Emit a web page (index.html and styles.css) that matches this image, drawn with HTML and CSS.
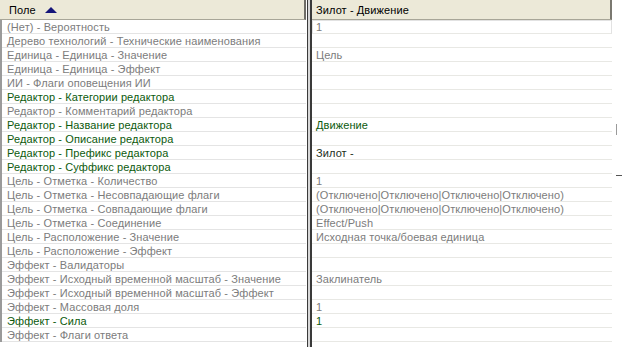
FILE: index.html
```html
<!DOCTYPE html>
<html>
<head>
<meta charset="utf-8">
<link rel="stylesheet" href="styles.css">
</head>
<body>
<div class="grid">
  <div class="col left">
    <div class="hdr hdr-left"><span>Поле</span><span class="tri"></span></div>
    <div class="row g">(Нет) - Вероятность</div>
    <div class="row g">Дерево технологий - Технические наименования</div>
    <div class="row g">Единица - Единица - Значение</div>
    <div class="row g">Единица - Единица - Эффект</div>
    <div class="row g">ИИ - Флаги оповещения ИИ</div>
    <div class="row gr">Редактор - Категории редактора</div>
    <div class="row g">Редактор - Комментарий редактора</div>
    <div class="row gr">Редактор - Название редактора</div>
    <div class="row gr">Редактор - Описание редактора</div>
    <div class="row gr">Редактор - Префикс редактора</div>
    <div class="row gr">Редактор - Суффикс редактора</div>
    <div class="row g">Цель - Отметка - Количество</div>
    <div class="row g">Цель - Отметка - Несовпадающие флаги</div>
    <div class="row g">Цель - Отметка - Совпадающие флаги</div>
    <div class="row g">Цель - Отметка - Соединение</div>
    <div class="row g">Цель - Расположение - Значение</div>
    <div class="row g">Цель - Расположение - Эффект</div>
    <div class="row g">Эффект - Валидаторы</div>
    <div class="row g">Эффект - Исходный временной масштаб - Значение</div>
    <div class="row g">Эффект - Исходный временной масштаб - Эффект</div>
    <div class="row g">Эффект - Массовая доля</div>
    <div class="row gr">Эффект - Сила</div>
    <div class="row g">Эффект - Флаги ответа</div>
  </div>
  <div class="split"></div>
  <div class="col right">
    <div class="hdr hdr-right">Зилот - Движение</div>
    <div class="row g first">1</div>
    <div class="row g"></div>
    <div class="row g">Цель</div>
    <div class="row g"></div>
    <div class="row g"></div>
    <div class="row g"></div>
    <div class="row g"></div>
    <div class="row gr">Движение</div>
    <div class="row g"></div>
    <div class="row dk">Зилот -</div>
    <div class="row g"></div>
    <div class="row g">1</div>
    <div class="row g">(Отключено|Отключено|Отключено|Отключено)</div>
    <div class="row g">(Отключено|Отключено|Отключено|Отключено)</div>
    <div class="row g">Effect/Push</div>
    <div class="row g">Исходная точка/боевая единица</div>
    <div class="row g"></div>
    <div class="row g"></div>
    <div class="row g">Заклинатель</div>
    <div class="row g"></div>
    <div class="row g">1</div>
    <div class="row gr">1</div>
    <div class="row g"></div>
  </div>
  <div class="gutter">
    <span class="mark m1"></span>
    <span class="mark m2"></span>
  </div>
</div>
</body>
</html>
```
FILE: styles.css
```css
html, body {
  margin: 0;
  padding: 0;
  background: #ffffff;
}
body {
  font-family: "Liberation Sans", Arial, sans-serif;
  font-size: 11px;
  letter-spacing: 0.1px;
  width: 627px;
  height: 347px;
  overflow: hidden;
}
.grid {
  display: flex;
  align-items: flex-start;
}
.col {
  display: flex;
  flex-direction: column;
}
.left {
  width: 306px;
  border-left: 2px solid #9a9a9a;
  box-sizing: border-box;
}
.right {
  width: 300px;
}
.split {
  width: 5px;
  height: 347px;
  box-sizing: border-box;
  margin-left: 1px;
  border-left: 1px solid #3a3a3a;
  border-right: 2px solid #3a3a3a;
  background: #d8d8d8;
}
.hdr {
  height: 20px;
  box-sizing: border-box;
  background: #ece9d8;
  border-bottom: 1px solid #a8a698;
  border-right: 2px solid #6e6d67;
  display: flex;
  align-items: center;
  color: #000;
  padding-top: 1px;
}
.hdr-left {
  margin-left: -2px;
  padding-left: 9px;
  gap: 9px;
}
.hdr-right {
  padding-left: 4px;
  border-right: 2px solid #7a7870;
}
.tri {
  width: 0;
  height: 0;
  border-left: 6px solid transparent;
  border-right: 6px solid transparent;
  border-bottom: 6px solid #15157a;
  margin-top: -1px;
}
.row {
  height: 14px;
  box-sizing: border-box;
  border-bottom: 1px solid #e4e4e4;
  padding-top: 1px;
  line-height: 13px;
  white-space: nowrap;
  overflow: hidden;
  padding-left: 5px;
}
.right .row {
  padding-left: 4px;
  border-bottom-color: #e8e8e4;
}
.first {
  border: 1px solid #e2e2e2;
  padding-left: 3px !important;
  padding-top: 0;
}
.g { color: #7c7c7c; }
.gr { color: #0d5a0d; }
.dk { color: #1c2e1c; }
.gutter {
  position: relative;
  flex: 1;
  height: 347px;
}
.mark {
  position: absolute;
  background: #9a9a9a;
}
.m1 {
  left: 4px;
  top: 124px;
  width: 1px;
  height: 11px;
}
.m2 {
  left: 4px;
  top: 175px;
  width: 6px;
  height: 1px;
  background: #555;
}
```
